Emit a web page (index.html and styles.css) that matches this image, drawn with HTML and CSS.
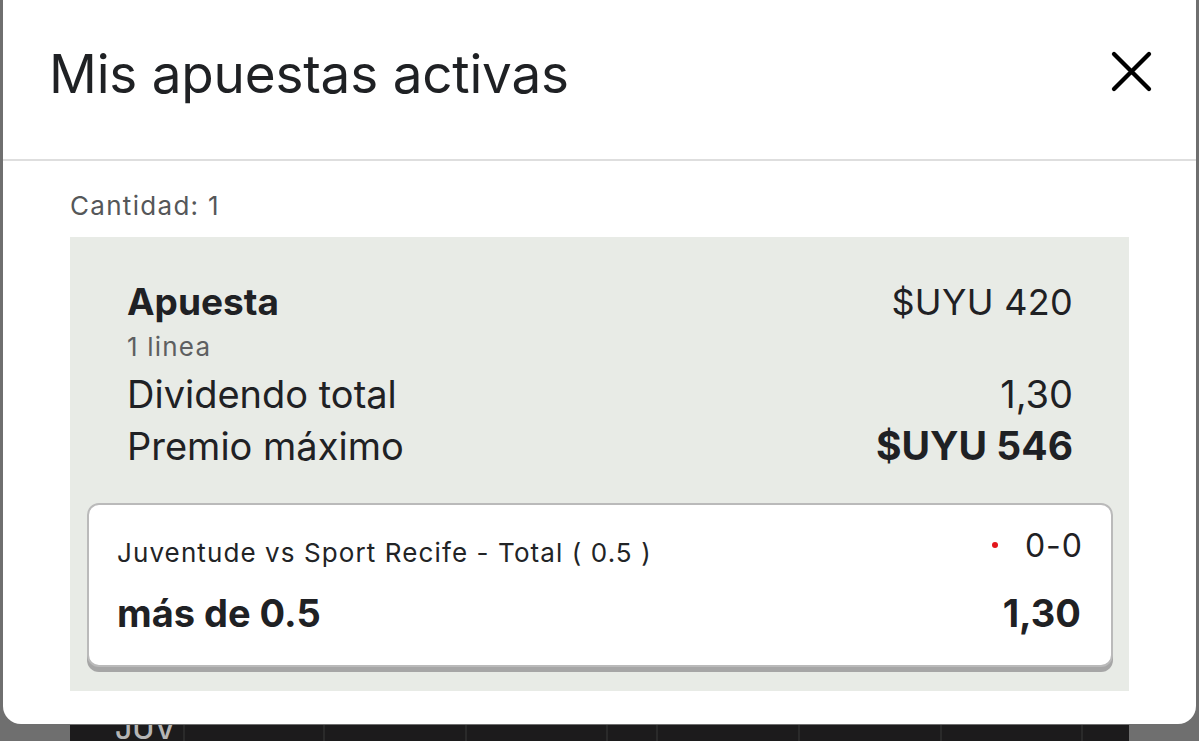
FILE: index.html
```html
<!DOCTYPE html>
<html lang="es">
<head>
<meta charset="utf-8">
<title>Mis apuestas activas</title>
<link rel="stylesheet" href="styles.css">
</head>
<body>
<div class="modal">
  <header class="modal-header">
    <h1 class="modal-title">Mis apuestas activas</h1>
    <button class="close-btn" aria-label="Cerrar">
      <svg width="44" height="44" viewBox="0 0 44 44"><path d="M5 5 L40 40 M40 5 L5 40" stroke="#000" stroke-width="4.3" stroke-linecap="round" fill="none"/></svg>
    </button>
  </header>
  <div class="modal-body">
    <div class="count">Cantidad: 1</div>
    <section class="bet">
      <div class="bet-summary">
        <div class="row row-head">
          <div class="bet-title">Apuesta</div>
          <div class="bet-amount">$UYU 420</div>
        </div>
        <div class="lines">1 linea</div>
        <div class="row row-big">
          <div>Dividendo total</div>
          <div>1,30</div>
        </div>
        <div class="row row-big">
          <div>Premio máximo</div>
          <div class="strong">$UYU 546</div>
        </div>
      </div>
      <div class="selection">
        <div class="row sel-top">
          <div class="sel-event">Juventude vs Sport Recife - Total ( 0.5 )</div>
          <div class="sel-score"><span class="live-dot"></span>0-0</div>
        </div>
        <div class="row sel-bottom">
          <div>más de 0.5</div>
          <div>1,30</div>
        </div>
      </div>
    </section>
  </div>
</div>
<div class="underlay">
  <div class="cell cell-first">JUV</div>
  <div class="cell w140"></div>
  <div class="cell w142"></div>
  <div class="cell w141"></div>
  <div class="cell w50"></div>
  <div class="cell w142"></div>
  <div class="cell w142"></div>
  <div class="cell w141"></div>
  <div class="cell cell-last"></div>
</div>
</body>
</html>
```

FILE: styles.css
```css
* { box-sizing: border-box; }
html, body { margin: 0; padding: 0; }
body {
  background: #6f6f6f;
  font-family: Inter, "Noto Sans", "Liberation Sans", sans-serif;
  color: #1f2124;
  height: 741px;
  overflow: hidden;
}
.modal {
  margin: 0 3px;
  background: #fff;
  border-radius: 0 0 18px 18px;
  height: 724px;
}
.modal-header {
  height: 161px;
  border-bottom: 2px solid #dedede;
  display: flex;
  align-items: flex-start;
  justify-content: space-between;
  padding: 42px 43px 0 46px;
}
.modal-title {
  margin: 0;
  font-size: 53px;
  line-height: 64px;
  font-weight: 400;
  letter-spacing: -0.2px;
  color: #1f2124;
}
.close-btn {
  background: none;
  border: 0;
  padding: 0;
  width: 44px;
  height: 44px;
  margin-top: 7px;
}
.close-btn svg { display: block; }
.modal-body {
  padding: 29px 67px 0 67px;
}
.count {
  font-size: 26px;
  letter-spacing: 1.3px;
  color: #555759;
  line-height: 32px;
  margin-bottom: 15px;
}
.bet {
  background: #e8ebe6;
  padding: 43px 16px 0 17px;
  height: 454px;
}
.bet-summary {
  padding: 0 40px;
}
.row {
  display: flex;
  justify-content: space-between;
  align-items: baseline;
}
.row-head { font-size: 36px; line-height: 44px; }
.bet-title { font-weight: 700; font-size: 37px; }
.bet-amount { letter-spacing: 0.3px; }
.lines {
  font-size: 26px;
  letter-spacing: 1.2px;
  color: #5d5f61;
  line-height: 32px;
  margin-top: 7px;
  margin-bottom: 5px;
}
.row-big {
  font-size: 38px;
  line-height: 52px;
}
.strong { font-weight: 700; font-size: 39px; }
.selection {
  margin-top: 31px;
  background: #fff;
  border: 2px solid #bababa;
  border-radius: 12px;
  box-shadow: 0 5px 0 #a6a6a6;
  padding: 21px 30px 28px 28px;
}
.sel-top {
  align-items: flex-start;
}
.sel-event {
  font-size: 26px;
  letter-spacing: 1.1px;
  line-height: 40px;
  padding-top: 7px;
  color: #222426;
}
.sel-score {
  display: flex;
  align-items: center;
  font-size: 32px;
  letter-spacing: 1px;
  line-height: 40px;
  margin-right: -2px;
}
.live-dot {
  width: 6px;
  height: 6px;
  border-radius: 50%;
  background: #e3161b;
  margin-right: 27px;
  margin-top: -2px;
}
.sel-bottom {
  font-size: 38px;
  font-weight: 700;
  line-height: 48px;
  margin-top: 16px;
}
.underlay {
  margin: 1px 70px 0 70px;
  height: 16px;
  background: #1c1b1c;
  display: flex;
  overflow: hidden;
}
.cell {
  border-right: 2px solid #2a2a2a;
  height: 100%;
}
.cell-first {
  width: 115px;
  color: #b5b5b5;
  font-size: 30px;
  line-height: 1;
  padding-left: 45px;
  margin-top: -12px;
  height: 40px;
  font-weight: 500;
}
.w140 { width: 140px; }
.w141 { width: 141px; }
.w142 { width: 142px; }
.w50 { width: 50px; }
.cell-last { flex: 1; border-right: 0; }
```
